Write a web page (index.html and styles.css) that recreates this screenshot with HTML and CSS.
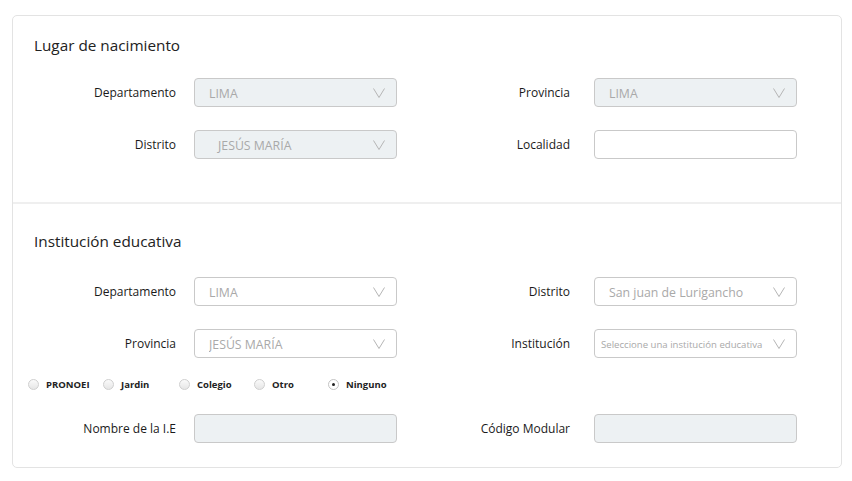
FILE: index.html
```html
<!DOCTYPE html>
<html lang="es">
<head>
<meta charset="utf-8">
<title>Formulario</title>
<link rel="stylesheet" href="styles.css">
</head>
<body>
<div class="card">
  <section class="section first">
    <h2 class="title">Lugar de nacimiento</h2>
    <div class="grid">
      <label class="lbl">Departamento</label>
      <div class="field disabled"><span class="val">LIMA</span><svg class="chev" viewBox="0 0 12 10"><polyline points="0.5,0.5 6,9.5 11.5,0.5"/></svg></div>
      <label class="lbl r">Provincia</label>
      <div class="field disabled"><span class="val">LIMA</span><svg class="chev" viewBox="0 0 12 10"><polyline points="0.5,0.5 6,9.5 11.5,0.5"/></svg></div>
      <label class="lbl">Distrito</label>
      <div class="field disabled"><span class="val ind">JESÚS MARÍA</span><svg class="chev" viewBox="0 0 12 10"><polyline points="0.5,0.5 6,9.5 11.5,0.5"/></svg></div>
      <label class="lbl r">Localidad</label>
      <div class="field input"></div>
    </div>
  </section>
  <section class="section second">
    <h2 class="title">Institución educativa</h2>
    <div class="grid">
      <label class="lbl">Departamento</label>
      <div class="field"><span class="val">LIMA</span><svg class="chev" viewBox="0 0 12 10"><polyline points="0.5,0.5 6,9.5 11.5,0.5"/></svg></div>
      <label class="lbl r">Distrito</label>
      <div class="field"><span class="val cap">San juan de Lurigancho</span><svg class="chev" viewBox="0 0 12 10"><polyline points="0.5,0.5 6,9.5 11.5,0.5"/></svg></div>
      <label class="lbl">Provincia</label>
      <div class="field"><span class="val">JESÚS MARÍA</span><svg class="chev" viewBox="0 0 12 10"><polyline points="0.5,0.5 6,9.5 11.5,0.5"/></svg></div>
      <label class="lbl r">Institución</label>
      <div class="field"><span class="val small">Seleccione una institución educativa</span><svg class="chev" viewBox="0 0 12 10"><polyline points="0.5,0.5 6,9.5 11.5,0.5"/></svg></div>
    </div>
    <div class="radios">
      <span class="radio"><span class="dot"></span>PRONOEI</span>
      <span class="radio"><span class="dot"></span>Jardin</span>
      <span class="radio"><span class="dot"></span>Colegio</span>
      <span class="radio"><span class="dot"></span>Otro</span>
      <span class="radio"><span class="dot on"></span>Ninguno</span>
    </div>
    <div class="grid last">
      <label class="lbl">Nombre de la I.E</label>
      <div class="field disabled"></div>
      <label class="lbl r">Código Modular</label>
      <div class="field disabled"></div>
    </div>
  </section>
</div>
</body>
</html>
```
FILE: styles.css
```css
* { box-sizing: border-box; }
html, body { margin: 0; padding: 0; background: #fff; }
body {
  font-family: "Open Sans", "Noto Sans", sans-serif;
  color: #222;
  padding: 15px 11px 0 12px;
}
.card {
  width: 830px;
  height: 453px;
  border: 1px solid #e3e3e3;
  border-radius: 5px;
  display: flex;
  flex-direction: column;
}
.first {
  padding-top: 18px;
  height: 188px;
  border-bottom: 2px solid #efefef;
}
.second { padding-top: 26px; }
.title {
  margin: 0 0 22px 21px;
  font-size: 15.3px;
  font-weight: 400;
  line-height: 22px;
  color: #222;
}
.second .title { margin-bottom: 25px; }
.grid {
  display: grid;
  grid-template-columns: 163px 203px 161px 203px;
  column-gap: 18px;
  row-gap: 23px;
  align-items: center;
}
.lbl {
  text-align: right;
  font-size: 12px;
  line-height: 16px;
  color: #1a1a1a;
}
.lbl.r { padding-right: 6px; }
.field {
  height: 29px;
  border: 1px solid #c9c9c9;
  border-radius: 4px;
  background: #fff;
  display: flex;
  align-items: center;
  padding: 0 11px 0 14px;
}
.field.disabled { background: #edf1f3; }
.val {
  flex: 1;
  font-size: 12.3px;
  color: #a9a9a9;
  white-space: nowrap;
  overflow: hidden;
  padding-top: 1px;
}
.val.ind { padding-left: 9px; }
.val.small { font-size: 9.6px; margin-left: -8px; }
.chev {
  width: 12px;
  height: 10px;
  fill: none;
  stroke: #b5b5b5;
  stroke-width: 1;
  flex: none;
}
.radios {
  display: flex;
  margin: 16px 0 0 15px;
  height: 20px;
  align-items: center;
}
.radio {
  display: flex;
  align-items: center;
  width: 75px;
  font-size: 9.5px;
  font-weight: 700;
  color: #222;
}
.radio:nth-child(2) { width: 76px; }
.radio:nth-child(4) { width: 74px; }
.dot {
  width: 11px;
  height: 11px;
  border-radius: 50%;
  border: 1px solid #cfcfcf;
  background: linear-gradient(#fafafa, #e6e6e6);
  margin-right: 7px;
  flex: none;
  position: relative;
}
.dot.on { background: #fff; border-color: #c4c4c4; }
.dot.on::after {
  content: "";
  position: absolute;
  left: 3px;
  top: 3px;
  width: 3px;
  height: 3px;
  border-radius: 50%;
  background: #222;
}
.grid.last { margin-top: 20px; }
```
